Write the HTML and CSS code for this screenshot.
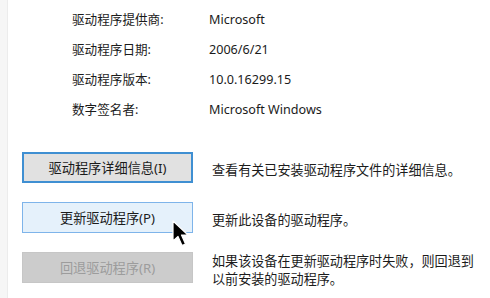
FILE: index.html
```html
<!DOCTYPE html>
<html lang="zh-CN">
<head>
<meta charset="utf-8">
<link rel="stylesheet" href="styles.css">
</head>
<body>
<div class="page">
  <div class="edge"></div>
  <div class="content">
    <div class="info">
      <div class="label">驱动程序提供商:</div><div class="value">Microsoft</div>
      <div class="label">驱动程序日期:</div><div class="value">2006/6/21</div>
      <div class="label">驱动程序版本:</div><div class="value">10.0.16299.15</div>
      <div class="label">数字签名者:</div><div class="value">Microsoft Windows</div>
    </div>
    <div class="actions">
      <div class="action">
        <button class="btn btn-focus">驱动程序详细信息(I)</button>
        <div class="desc">查看有关已安装驱动程序文件的详细信息。</div>
      </div>
      <div class="action">
        <button class="btn btn-hover">更新驱动程序(P)</button>
        <div class="desc">更新此设备的驱动程序。</div>
        <svg class="cursor" width="18" height="28" viewBox="0 0 18 28">
          <path d="M1 1 L1 21 L6 16.5 L10 25.5 L13.5 24 L9.5 15 L16 15 Z" fill="#000" stroke="#fff" stroke-width="1.2" stroke-linejoin="round"/>
        </svg>
      </div>
      <div class="action">
        <button class="btn btn-disabled">回退驱动程序(R)</button>
        <div class="desc">如果该设备在更新驱动程序时失败，则回退到<br>以前安装的驱动程序。</div>
      </div>
    </div>
  </div>
</div>
</body>
</html>
```
FILE: styles.css
```css
* { box-sizing: border-box; }
html, body { margin: 0; padding: 0; background: #fff; }
body {
  width: 490px;
  height: 298px;
  overflow: hidden;
  font-family: "Noto Sans", "Noto Sans CJK SC", sans-serif;
  font-size: 12.6px;
  color: #1b1b1b;
}
.page { display: flex; height: 298px; }
.edge {
  width: 8px;
  flex: none;
  background: #f6f6f6;
  border-right: 1px solid #ececec;
}
.content { flex: 1; padding-left: 14px; }
.info {
  display: grid;
  grid-template-columns: 137px auto;
  grid-auto-rows: 30px;
  align-items: center;
  padding-top: 5px;
  padding-left: 50px;
}
.label, .value { line-height: 30px; }
.actions {
  display: flex;
  flex-direction: column;
  gap: 19px;
  margin-top: 27px;
}
.action {
  position: relative;
  display: flex;
  align-items: center;
  gap: 19px;
  height: 31px;
}
.btn {
  width: 171px;
  height: 31px;
  flex: none;
  font: inherit;
  font-size: 13.2px;
  color: #1b1b1b;
  padding: 0;
  border: 1px solid #adadad;
  background: #e1e1e1;
}
.btn-focus { border: 2px solid #3f8fd2; background: #e1e1e1; }
.btn-hover { border: 1px solid #7eb4ea; background: #e5f1fb; }
.btn-disabled { border: 1px solid #c6c6c6; background: #cccccc; color: #9c9c9c; }
.desc { font-size: 13.1px; line-height: 18px; padding-top: 5px; }
.cursor { position: absolute; left: 150px; top: 18px; }
```
